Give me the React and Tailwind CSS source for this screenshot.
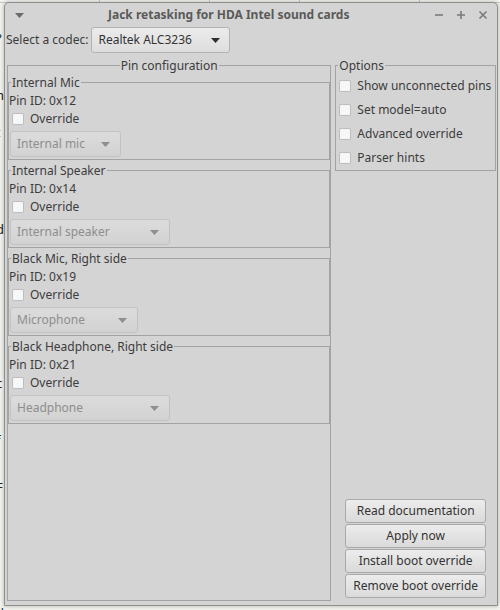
import React from 'react';

const font = { fontFamily: '"Noto Sans", "Open Sans", sans-serif' };

const pins = [
  { name: 'Internal Mic', id: '0x12', value: 'Internal mic', width: 'w-[111px]' },
  { name: 'Internal Speaker', id: '0x14', value: 'Internal speaker', width: 'w-[160px]' },
  { name: 'Black Mic, Right side', id: '0x19', value: 'Microphone', width: 'w-[128px]' },
  { name: 'Black Headphone, Right side', id: '0x21', value: 'Headphone', width: 'w-[160px]' },
];

const options = ['Show unconnected pins', 'Set model=auto', 'Advanced override', 'Parser hints'];

const actions = ['Read documentation', 'Apply now', 'Install boot override', 'Remove boot override'];

const Arrow = ({ color = '#333' }) => (
  <svg width="9" height="5" viewBox="0 0 9 5">
    <path d="M0 0 L9 0 L4.5 5 Z" fill={color} />
  </svg>
);

const Checkbox = () => (
  <span className="inline-block w-[12px] h-[12px] rounded-[2px] border border-[#bdbdbd] bg-[#f7f7f7] shrink-0" />
);

// Greyed-out combo box inside each pin frame
const DisabledCombo = ({ value, width }) => (
  <div
    className={`${width} h-[26px] ml-[1px] flex items-center justify-between pl-[6px] pr-[10px] rounded-[3px] border border-[#c2c2c2] bg-gradient-to-b from-[#dcdcdc] to-[#d2d2d2] text-[#8e8e8e]`}
  >
    <span>{value}</span>
    <Arrow color="#8e8e8e" />
  </div>
);

const PinFrame = ({ pin }) => (
  <fieldset className="border border-[#a3a3a3] h-[86px] mb-[2px] min-w-0">
    <legend className="ml-[2px] px-[1px] leading-[17px]">{pin.name}</legend>
    <div className="pt-[1px] leading-[17px]">Pin ID: {pin.id}</div>
    <label className="flex items-center h-[20px] pl-[3px] gap-[6px]">
      <Checkbox />
      <span>Override</span>
    </label>
    <div className="mt-[2px]">
      <DisabledCombo value={pin.value} width={pin.width} />
    </div>
  </fieldset>
);

const WindowControls = () => (
  <div className="flex items-center gap-[10px] text-[#7a7a7a]">
    <svg width="12" height="12" viewBox="0 0 12 12"><path d="M2 6 H10" stroke="currentColor" strokeWidth="1.6" /></svg>
    <svg width="12" height="12" viewBox="0 0 12 12"><path d="M2 6 H10 M6 2 V10" stroke="currentColor" strokeWidth="1.6" /></svg>
    <svg width="12" height="12" viewBox="0 0 12 12"><path d="M2.5 2.5 L9.5 9.5 M9.5 2.5 L2.5 9.5" stroke="currentColor" strokeWidth="1.6" /></svg>
  </div>
);

// Bits of the window behind, peeking out at the left edge
const Backdrop = () => (
  <div className="absolute inset-0 bg-[#f4f4ef]">
    <div className="flex h-[3px] border-b border-[#c8c8c8]">
      <div className="w-[100px] border-r border-[#c8c8c8]" />
      <div className="w-[110px] border-r border-[#c8c8c8]" />
      <div className="w-[90px] border-r border-[#c8c8c8]" />
      <div className="w-[120px] border-r border-[#c8c8c8]" />
    </div>
    <div className="absolute left-[-4px] top-[30px] flex flex-col text-[13px] leading-[17px] text-[#222]">
      <span>?</span>
      <span className="mt-[40px]">h</span>
      <span className="mt-[20px] text-[#e0552a]">t</span>
      <span className="mt-[80px]">d</span>
      <span className="mt-[60px]">-</span>
      <span className="mt-[60px]">c</span>
      <span className="mt-[40px]">f</span>
      <span className="mt-[30px]">F</span>
      <span className="mt-[106px] text-[#1a2a6a]">u</span>
      <span className="mt-[4px] text-[#1a2a6a]">c</span>
      <span className="mt-[4px]">a</span>
    </div>
  </div>
);

export default function App() {
  return (
    <div className="relative w-[500px] h-[610px] overflow-hidden text-[12px] text-[#3c3c3c]" style={font}>
      <Backdrop />
      <div className="absolute left-[4px] top-[2px] w-[494px] h-[604px] flex flex-col rounded-t-[5px] border border-[#8f8f8f] bg-[#d4d4d4] shadow-[0_0_4px_rgba(0,0,0,0.3)]">
        {/* Title bar */}
        <div className="h-[24px] flex items-center shrink-0">
          <div className="w-[29px] flex justify-center">
            <Arrow color="#6a6a6a" />
          </div>
          <div className="ml-[74px] font-bold text-[#5a5a5a] whitespace-nowrap">
            Jack retasking for HDA Intel sound cards
          </div>
          <div className="ml-auto mr-[8px]">
            <WindowControls />
          </div>
        </div>

        {/* Codec selector */}
        <div className="flex items-center h-[26px] pl-[1px]">
          <span>Select a codec:</span>
          <div className="ml-[3px] w-[139px] h-[26px] flex items-center justify-between pl-[6px] pr-[9px] rounded-[3px] border border-[#b3b3b3] bg-gradient-to-b from-[#ebebeb] to-[#dedede] text-[#333]">
            <span>Realtek ALC3236</span>
            <Arrow color="#2e2e2e" />
          </div>
        </div>

        <div className="flex flex-1 gap-[4px] mt-[4px] pl-[2px] pr-[1px] pb-[4px]">
          {/* Pin configuration */}
          <fieldset className="w-[325px] border border-[#a3a3a3] min-w-0">
            <legend className="mx-auto px-[1px] leading-[17px]">Pin configuration</legend>
            {pins.map((pin) => (
              <PinFrame key={pin.id} pin={pin} />
            ))}
          </fieldset>

          {/* Options + actions */}
          <div className="w-[161px] flex flex-col">
            <fieldset className="border border-[#a3a3a3] min-w-0">
              <legend className="ml-[2px] px-[1px] leading-[17px]">Options</legend>
              {options.map((opt) => (
                <label key={opt} className="flex items-center h-[24px] pl-[3px] gap-[6px]">
                  <Checkbox />
                  <span className="whitespace-nowrap">{opt}</span>
                </label>
              ))}
            </fieldset>
            <div className="mt-auto mb-[3px] flex flex-col items-center gap-[1px]">
              {actions.map((a) => (
                <button
                  key={a}
                  className="w-[141px] h-[24px] rounded-[3px] border border-[#a9a9a9] bg-gradient-to-b from-[#ececec] to-[#dadada] text-[#333] leading-none"
                >
                  {a}
                </button>
              ))}
            </div>
          </div>
        </div>
      </div>
    </div>
  );
}
